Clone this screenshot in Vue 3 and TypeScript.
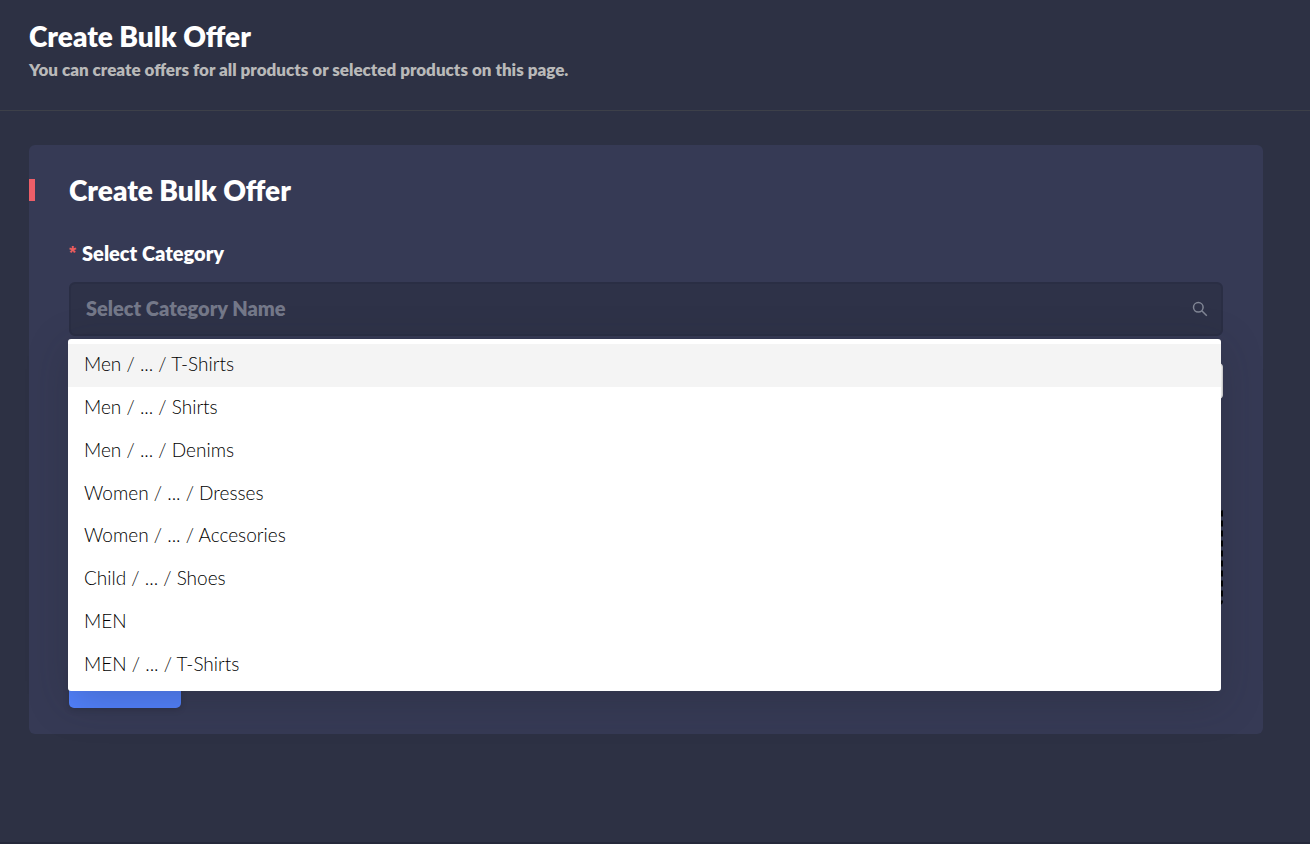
<script setup lang="ts">
import { ref } from 'vue'

const search = ref<string>('')
const productGroup = ref<string>('')
const activeIndex = ref<number>(0)

const categories: string[] = [
  'Men / ... / T-Shirts',
  'Men / ... / Shirts',
  'Men / ... / Denims',
  'Women / ... / Dresses',
  'Women / ... / Accesories',
  'Child / ... / Shoes',
  'MEN',
  'MEN / ... / T-Shirts',
]

function choose(index: number): void {
  activeIndex.value = index
  search.value = categories[index]
}
</script>

<template>
  <div class="page">
    <header class="page-header">
      <h1 class="title">Create Bulk Offer</h1>
      <p class="subtitle">You can create offers for all products or selected products on this page.</p>
    </header>

    <main class="content">
      <section class="card">
        <h2 class="title card-title">Create Bulk Offer</h2>

        <form class="form" @submit.prevent>
          <label class="label" for="category"><span class="required">*</span>Select Category</label>

          <div class="field">
            <input
              id="category"
              v-model="search"
              class="search"
              type="text"
              role="combobox"
              aria-expanded="true"
              aria-controls="category-list"
              autocomplete="off"
              placeholder="Select Category Name"
            />
            <svg class="search-icon" viewBox="0 0 16 16" aria-hidden="true">
              <circle cx="6.3" cy="6.3" r="4.8" />
              <path d="M9.8 9.8 L14.8 14.8" />
            </svg>

            <ul id="category-list" class="menu" role="listbox">
              <li
                v-for="(category, index) in categories"
                :key="category"
                class="option"
                :class="{ active: index === activeIndex }"
                role="option"
                :aria-selected="index === activeIndex"
                @click="choose(index)"
              >
                {{ category }}
              </li>
            </ul>
          </div>

          <input v-model="productGroup" class="plain-input" type="text" aria-label="Offer" />
          <div class="drop-area"></div>
          <button class="submit" type="submit" aria-label="Create"></button>
        </form>
      </section>
    </main>
  </div>
</template>

<style>
body {
  margin: 0;
  background: #2d3144;
}
</style>

<style scoped>
.page {
  box-sizing: border-box;
  min-height: 100vh;
  background: #2d3144;
  border-bottom: 2px solid #25283a;
  color: #fff;
  font-family: Lato, "Liberation Sans", sans-serif;
}

.page-header {
  padding: 19px 29px 30px;
  border-bottom: 1px solid #3d4049;
}

.title {
  margin: 0;
  font-size: 28px;
  line-height: 34px;
  font-weight: 800;
}

.subtitle {
  margin: 7px 0 0;
  font-size: 17px;
  line-height: 20px;
  font-weight: 800;
  color: #b9b9b9;
}

.content {
  padding: 34px 47px 34px 29px;
}

.card {
  padding: 28px 40px 26px;
  border-radius: 6px;
  background: #363a55;
}

.card-title {
  display: flex;
  align-items: center;
  margin-left: -40px;
}

.card-title::before {
  content: "";
  width: 6px;
  height: 22px;
  margin-right: 34px;
  background: #ed5e68;
}

.form {
  display: flex;
  flex-direction: column;
  align-items: stretch;
}

.label {
  display: flex;
  align-items: center;
  margin: 34px 0 17px;
  font-size: 20px;
  line-height: 24px;
  font-weight: 800;
}

.required {
  margin-right: 6px;
  color: #ed5e5e;
  font-family: "Liberation Sans", sans-serif;
  font-size: 18px;
  font-weight: 700;
}

.field {
  position: relative;
  margin-bottom: 27px;
}

.search {
  display: block;
  box-sizing: border-box;
  width: 100%;
  height: 54px;
  padding: 0 48px 2px 15px;
  border: 2px solid #2a2e44;
  border-radius: 6px;
  outline: none;
  background: #2e3248;
  color: #fff;
  font: 800 20px/24px Lato, "Liberation Sans", sans-serif;
}

.search::placeholder {
  color: #747889;
  opacity: 1;
}

.search-icon {
  position: absolute;
  top: 19px;
  right: 15px;
  width: 16px;
  height: 16px;
  fill: none;
  stroke: #818695;
  stroke-width: 1.5;
}

.menu {
  position: absolute;
  z-index: 1;
  top: 57px;
  left: -1px;
  right: 2px;
  display: flex;
  flex-direction: column;
  box-sizing: border-box;
  height: 352px;
  margin: 0;
  padding: 5px 0;
  border-radius: 3px;
  background: #fff;
  box-shadow: 0 10px 40px rgba(30, 35, 40, 0.25);
  list-style: none;
}

.option {
  display: flex;
  flex: 1;
  align-items: center;
  padding: 0 16px 2px;
  color: #000;
  font-size: 19px;
  line-height: 24px;
  font-weight: 300;
  cursor: pointer;
}

.option.active {
  background: #f4f4f4;
}

.plain-input {
  box-sizing: border-box;
  height: 36px;
  border: 1px solid #e0e0e0;
  border-radius: 4px;
  background: #fff;
}

.drop-area {
  box-sizing: border-box;
  height: 97px;
  margin: 109px 0 63px;
  border: 2px dashed #000;
  border-radius: 4px;
}

.submit {
  width: 112px;
  height: 40px;
  border: 0;
  border-radius: 5px;
  background: #5282ff;
  box-shadow: 0 2px 6px rgba(0, 0, 0, 0.15);
}
</style>
